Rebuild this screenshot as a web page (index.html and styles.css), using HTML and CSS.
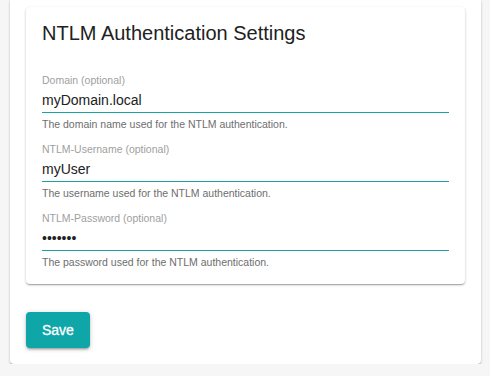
FILE: index.html
```html
<!DOCTYPE html>
<html lang="en">
<head>
    <meta charset="UTF-8">
    <meta name="viewport" content="width=device-width, initial-scale=1.0">
    <title>NTLM Authentication Settings</title>
    <link rel="stylesheet" href="styles.css">
</head>
<body>
    <div class="page-card">
        <div class="settings-card">
            <div class="card-title">NTLM Authentication Settings</div>

            <div class="field">
                <label class="field-label" for="domain">Domain (optional)</label>
                <input class="field-input" id="domain" type="text" value="myDomain.local">
                <div class="field-helper">The domain name used for the NTLM authentication.</div>
            </div>

            <div class="field">
                <label class="field-label" for="username">NTLM-Username (optional)</label>
                <input class="field-input" id="username" type="text" value="myUser">
                <div class="field-helper">The username used for the NTLM authentication.</div>
            </div>

            <div class="field">
                <label class="field-label" for="password">NTLM-Password (optional)</label>
                <input class="field-input" id="password" type="password" value="1234567">
                <div class="field-helper">The password used for the NTLM authentication.</div>
            </div>
        </div>

        <button class="save-button" type="button">Save</button>
    </div>
</body>
</html>
```

FILE: styles.css
```css
:root {
    --teal: #0ea6a7;
    --teal-line: #1ba2a6;
    --page-background: #f6f6f6;
    --card-background: #ffffff;
    --text-primary: #212121;
    --text-label: #a0a0a0;
    --text-helper: #6e6e6e;
    --border-radius: 4px;
    --shadow: 0 1px 3px rgba(0, 0, 0, 0.2), 0 1px 1px rgba(0, 0, 0, 0.14), 0 2px 1px -1px rgba(0, 0, 0, 0.12);
}

* {
    margin: 0;
    padding: 0;
    box-sizing: border-box;
}

body {
    background: var(--page-background);
    font-family: 'Liberation Sans', Arial, sans-serif;
    font-size: 14px;
    color: var(--text-primary);
    padding: 0 9px 0 10px;
}

.page-card {
    background: var(--card-background);
    border-radius: 0 0 var(--border-radius) var(--border-radius);
    box-shadow: var(--shadow);
    padding: 7px 16px 16px;
}

.settings-card {
    background: var(--card-background);
    border-radius: var(--border-radius);
    box-shadow: var(--shadow);
    padding: 14px 16px 16px;
}

.card-title {
    font-size: 20px;
    line-height: 24px;
    font-weight: 400;
    margin-bottom: 29px;
}

.field {
    display: flex;
    flex-direction: column;
}

.field + .field {
    margin-top: 13px;
}

.field-label {
    font-size: 10.5px;
    line-height: 12px;
    color: var(--text-label);
}

.field-input {
    font: inherit;
    font-size: 14px;
    color: var(--text-primary);
    height: 19px;
    line-height: 19px;
    padding: 5px 0 2px;
    border: none;
    border-bottom: 1px solid var(--teal-line);
    background: transparent;
    outline: none;
    width: 100%;
    box-sizing: content-box;
}

.field-helper {
    font-size: 10.5px;
    line-height: 12px;
    color: var(--text-helper);
    margin-top: 5px;
}

.save-button {
    margin-top: 28px;
    height: 36px;
    padding: 0 16px;
    border: none;
    border-radius: var(--border-radius);
    background: var(--teal);
    color: #ffffff;
    font-family: inherit;
    font-size: 14px;
    font-weight: 500;
    line-height: 36px;
    cursor: pointer;
    -webkit-text-stroke: 0.3px #ffffff;
    box-shadow: 0 1px 5px rgba(0, 0, 0, 0.2), 0 2px 2px rgba(0, 0, 0, 0.14), 0 3px 1px -2px rgba(0, 0, 0, 0.12);
}
```
